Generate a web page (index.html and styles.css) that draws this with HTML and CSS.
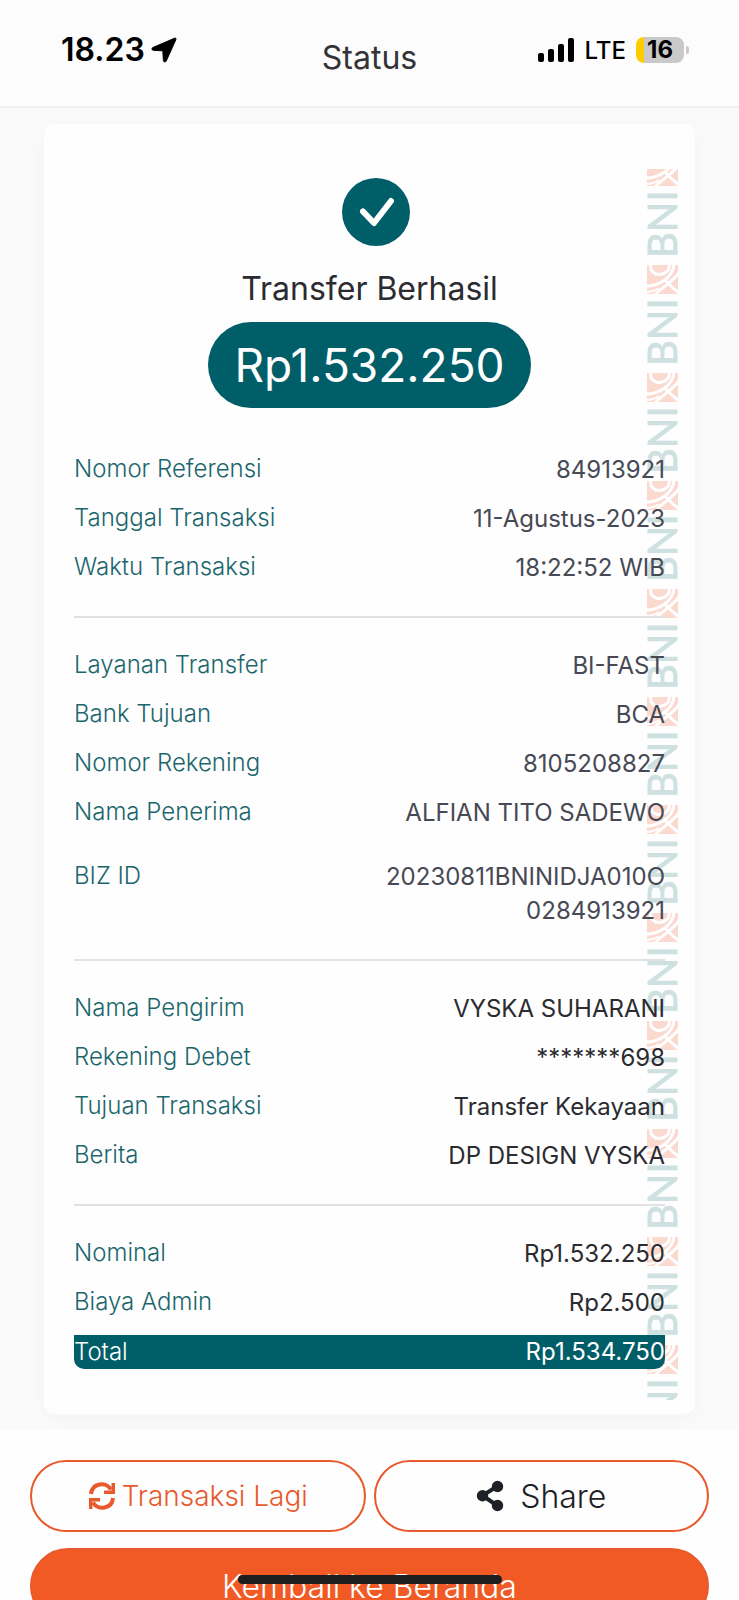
FILE: index.html
```html
<!DOCTYPE html>
<html lang="id">
<head>
<meta charset="utf-8">
<meta name="viewport" content="width=device-width, initial-scale=1">
<title>Status</title>
<link rel="stylesheet" href="styles.css">
</head>
<body>
<div class="app">
  <header class="topbar">
    <div class="clock">
      <span>18.23</span>
      <svg class="clock-icon" viewBox="0 0 26 26" aria-hidden="true"><path d="M23.6 1.2 1.8 10.6c-1.4.7-1.1 2.6.4 2.7l9.6.5.6 9.8c.2 1.6 2.1 1.9 2.8.5L24.900 2.600c.4-1-.3-1.8-1.300-1.400z" fill="#000" stroke="#000"/></svg>
    </div>
    <h1 class="title">Status</h1>
    <div class="indicators">
      <svg class="signal" viewBox="0 0 38 26" aria-hidden="true">
        <rect x="1" y="16" width="6" height="9" rx="2"/><rect x="11" y="12" width="6" height="13" rx="2"/><rect x="21" y="7" width="6" height="18" rx="2"/><rect x="31" y="1" width="6" height="24" rx="2"/>
      </svg>
      <span class="network">LTE</span>
      <span class="battery"><span class="battery-body">16</span><span class="battery-cap"></span></span>
    </div>
  </header>

  <main class="content">
    <article class="receipt">
      <svg class="watermark" aria-hidden="true">
        <defs>
          <pattern id="bni" width="32" height="108" y="-12" patternUnits="userSpaceOnUse">
            <path fill="#fbd9cf" d="M1 0h31v29H1z"/>
            <g fill="none" stroke="#fff" stroke-width="3">
              <path d="M0 21C13 21 27 13 28-1"/>
              <path d="M5-1C3 6 9 11 16 9S24 3 23-1"/>
              <path d="M9 30C15 23 25 18 33 8"/>
              <path d="M18 14C22 18 26 23 33 28"/>
              <path d="M0 27C5 27 9 26 13 23" stroke-width="2"/>
            </g>
            <text class="watermark-text" transform="translate(31 101) rotate(-90)">BNI</text>
          </pattern>
        </defs>
        <rect width="32" height="100%" fill="url(#bni)"/>
      </svg>

      <section class="summary">
        <svg class="check" viewBox="0 0 82 70" role="img" aria-label="Berhasil">
          <circle cx="47" cy="35" r="34" fill="#005e68"/>
          <path d="M34 34.500 45 46 62 24" fill="none" stroke="#fff" stroke-width="6" stroke-linecap="round" stroke-linejoin="round"/>
        </svg>
        <h2 class="result">Transfer Berhasil</h2>
        <p class="amount">Rp1.532.250</p>
      </section>

      <dl class="group soft">
        <div class="row"><dt>Nomor Referensi</dt><dd>84913921</dd></div>
        <div class="row"><dt>Tanggal Transaksi</dt><dd>11-Agustus-2023</dd></div>
        <div class="row"><dt>Waktu Transaksi</dt><dd>18:22:52 WIB</dd></div>
      </dl>
      <hr class="divider">
      <dl class="group soft">
        <div class="row"><dt>Layanan Transfer</dt><dd>BI-FAST</dd></div>
        <div class="row"><dt>Bank Tujuan</dt><dd>BCA</dd></div>
        <div class="row"><dt>Nomor Rekening</dt><dd>8105208827</dd></div>
        <div class="row"><dt>Nama Penerima</dt><dd>ALFIAN TITO SADEWO</dd></div>
        <div class="row spaced"><dt>BIZ ID</dt><dd>20230811BNINIDJA010O<br>0284913921</dd></div>
      </dl>
      <hr class="divider">
      <dl class="group">
        <div class="row"><dt>Nama Pengirim</dt><dd>VYSKA SUHARANI</dd></div>
        <div class="row"><dt>Rekening Debet</dt><dd>*******698</dd></div>
        <div class="row"><dt>Tujuan Transaksi</dt><dd>Transfer Kekayaan</dd></div>
        <div class="row"><dt>Berita</dt><dd>DP DESIGN VYSKA</dd></div>
      </dl>
      <hr class="divider">
      <dl class="group">
        <div class="row"><dt>Nominal</dt><dd>Rp1.532.250</dd></div>
        <div class="row"><dt>Biaya Admin</dt><dd>Rp2.500</dd></div>
        <div class="row total"><dt>Total</dt><dd>Rp1.534.750</dd></div>
      </dl>
    </article>
  </main>

  <footer class="actions">
    <button class="btn again" type="button">
      <svg class="again-icon" viewBox="0 0 28 28" aria-hidden="true">
        <g fill="none" stroke="currentColor" stroke-width="4"><path d="M3 12C4 1 18-1 23 7.500"/><path d="M25 16C24 27 10 29 5 20.500"/></g>
        <path fill="currentColor" d="M27 1v11H16V8.500h7.500V1zM1 27V16h11v3.500H4.500V27z"/>
      </svg>
      <span>Transaksi Lagi</span>
    </button>
    <button class="btn share" type="button">
      <svg class="share-icon" viewBox="0 0 28 32" aria-hidden="true">
        <path d="M21 6.500 6.500 15.500 21 25.500" fill="none" stroke="currentColor" stroke-width="4"/>
        <g fill="currentColor"><circle cx="21.500" cy="6.500" r="5.700"/><circle cx="6.500" cy="15.700" r="5.700"/><circle cx="21.500" cy="25.500" r="5.700"/></g>
      </svg>
      <span>Share</span>
    </button>
    <button class="btn home" type="button">Kembali ke Beranda</button>
  </footer>
  <div class="home-indicator"></div>
</div>
</body>
</html>
```

FILE: styles.css
```css
* { box-sizing: border-box; }

body {
  margin: 0;
  background: #fefefe;
  color: #2b2b30;
  font-family: Inter, "Open Sans", sans-serif;
}

.app {
  height: 100vh;
  overflow: hidden;
}

.topbar {
  display: grid;
  grid-template-columns: 1fr auto 1fr;
  align-items: start;
  padding: 32px 50px 22px;
  background: #fcfcfc;
  border-bottom: 2px solid #f1f1f1;
}

.clock {
  display: flex;
  align-items: center;
  gap: 6px;
  padding-left: 11px;
  color: #000;
  font-size: 32px;
  font-weight: 600;
  line-height: 36px;
}

.clock-icon { width: 26px; height: 26px; }

.title {
  margin: 0;
  color: #333338;
  font-size: 32px;
  font-weight: 400;
  line-height: 52px;
}

.indicators {
  display: flex;
  align-items: center;
  justify-content: flex-end;
  gap: 10px;
  height: 36px;
  color: #000;
}

.signal { width: 38px; height: 26px; }

.network {
  font-size: 24px;
  font-weight: 500;
}

.battery {
  display: flex;
  align-items: center;
  gap: 2px;
}

.battery-body {
  width: 48px;
  border-radius: 8px;
  background: linear-gradient(90deg, #ffcc00 8px, #c9c9c9 8px);
  font-size: 24px;
  font-weight: 700;
  line-height: 26px;
  text-align: center;
}

.battery-cap {
  width: 3px;
  height: 8px;
  border-radius: 0 3px 3px 0;
  background: #c9c9c9;
}

.content {
  padding: 16px 44px;
  background: #fafafa;
}

.receipt {
  position: relative;
  padding: 53px 30px 45px;
  border-radius: 10px;
  background: #fefefe;
  box-shadow: 0 4px 20px rgba(0, 0, 0, 0.03);
}

.watermark {
  position: absolute;
  top: 45px;
  right: 17px;
  bottom: 14px;
  width: 32px;
  height: calc(100% - 59px);
}

.watermark-text {
  fill: #cfe0e1;
  stroke: #cfe0e1;
  font-family: Lato, sans-serif;
  font-size: 40px;
}

.summary {
  position: relative;
  display: flex;
  flex-direction: column;
  align-items: center;
}

.check { width: 82px; height: 70px; }

.result {
  margin: 21px 0 12px;
  font-size: 32px;
  font-weight: 400;
  line-height: 42px;
}

.amount {
  margin: 0 0 45px;
  padding: 0 26px;
  border-radius: 43px;
  background: #005e68;
  color: #fff;
  font-size: 46px;
  font-weight: 400;
  line-height: 86px;
}

.group {
  position: relative;
  display: flex;
  flex-direction: column;
  gap: 15px;
  margin: 0;
}

.row {
  display: flex;
  justify-content: space-between;
  font-size: 24px;
}

.row dt {
  color: #1b666c;
  font-weight: 300;
  line-height: 32px;
}

.row dd {
  margin: 0;
  line-height: 34px;
  text-align: right;
}

.soft dd { color: #474955; }

.spaced { margin-top: 15px; }

.divider {
  position: relative;
  height: 2px;
  margin: 31px 0;
  border: 0;
  background: #e2e2e2;
}

.total {
  border-radius: 0 0 10px 10px;
  background: #005e68;
}

.total dt {
  color: #fff;
  line-height: 34px;
}

.total dd { color: #fff; }

.actions {
  display: grid;
  grid-template-columns: 1fr 1fr;
  gap: 16px 8px;
  padding: 30px 30px;
}

.btn {
  display: flex;
  align-items: center;
  justify-content: center;
  height: 72px;
  border: 2px solid #e85a2c;
  border-radius: 38px;
  background: #fefefe;
  font-family: inherit;
  font-weight: 300;
}

.again {
  gap: 6px;
  color: #e85a2c;
  font-size: 28px;
}

.again-icon { width: 28px; height: 28px; }

.share {
  gap: 16px;
  color: #1e2228;
  font-size: 32px;
}

.share-icon { width: 28px; height: 32px; }

.home {
  grid-column: 1 / -1;
  height: 76px;
  background: #f15a24;
  color: #fff;
  font-size: 32px;
}

.home-indicator {
  position: fixed;
  bottom: 16px;
  left: 50%;
  width: 264px;
  height: 9px;
  margin-left: -132px;
  border-radius: 5px;
  background: #1e1e1e;
}
```
